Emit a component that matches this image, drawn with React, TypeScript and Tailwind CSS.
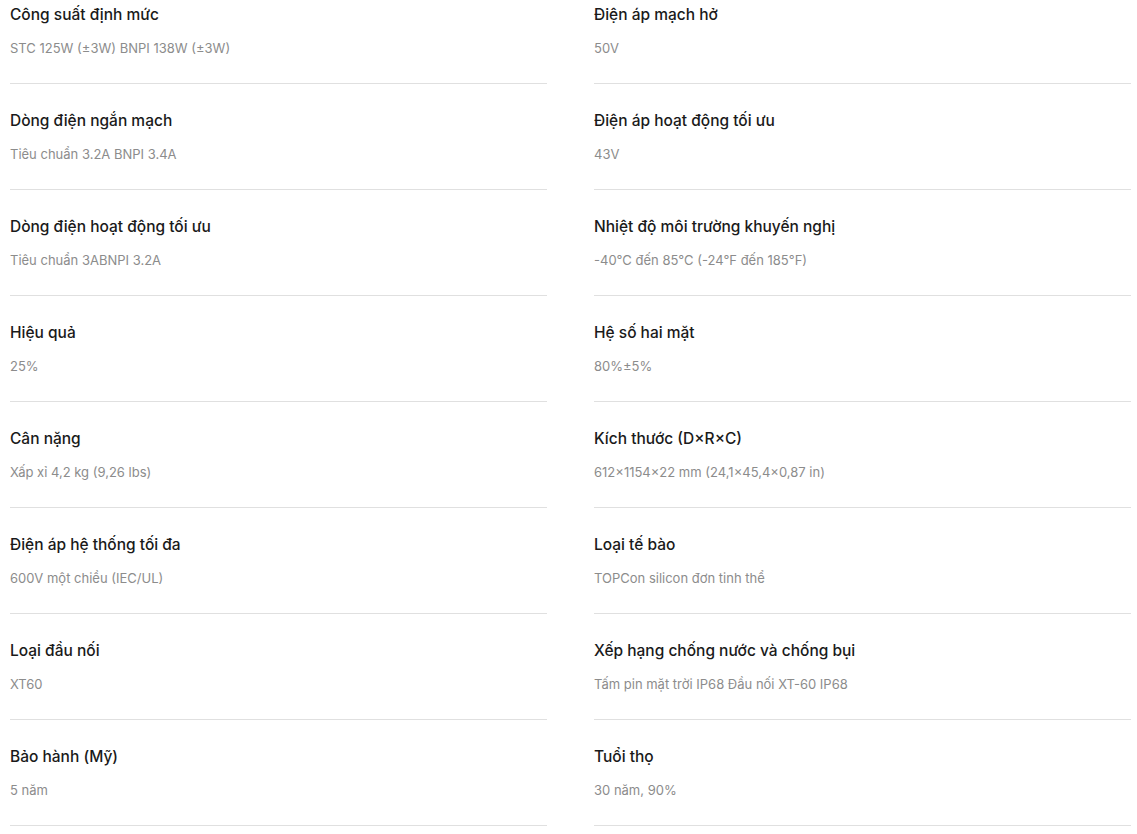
const specs: { label: string; value: string }[] = [
  { label: "Công suất định mức", value: "STC 125W (±3W) BNPI 138W (±3W)" },
  { label: "Điện áp mạch hở", value: "50V" },
  { label: "Dòng điện ngắn mạch", value: "Tiêu chuẩn 3.2A BNPI 3.4A" },
  { label: "Điện áp hoạt động tối ưu", value: "43V" },
  { label: "Dòng điện hoạt động tối ưu", value: "Tiêu chuẩn 3ABNPI 3.2A" },
  { label: "Nhiệt độ môi trường khuyến nghị", value: "-40°C đến 85°C (-24°F đến 185°F)" },
  { label: "Hiệu quả", value: "25%" },
  { label: "Hệ số hai mặt", value: "80%±5%" },
  { label: "Cân nặng", value: "Xấp xỉ 4,2 kg (9,26 lbs)" },
  { label: "Kích thước (D×R×C)", value: "612×1154×22 mm (24,1×45,4×0,87 in)" },
  { label: "Điện áp hệ thống tối đa", value: "600V một chiều (IEC/UL)" },
  { label: "Loại tế bào", value: "TOPCon silicon đơn tinh thể" },
  { label: "Loại đầu nối", value: "XT60" },
  { label: "Xếp hạng chống nước và chống bụi", value: "Tấm pin mặt trời IP68 Đầu nối XT-60 IP68" },
  { label: "Bảo hành (Mỹ)", value: "5 năm" },
  { label: "Tuổi thọ", value: "30 năm, 90%" },
];

export default function App() {
  return (
    <div className="min-h-screen bg-white font-['Inter',sans-serif]">
      <div className="grid grid-cols-2 gap-x-[47px] gap-y-[25px] pl-[10px] pr-[6px] pt-[3px]">
        {specs.map((s) => (
          <div key={s.label} className="border-b border-[#e0e0e0] pb-[25px]">
            <p className="text-[15.5px] leading-6 font-medium text-[#1a1a1a]">
              {s.label}
            </p>
            <p className="mt-[11px] text-[13px] leading-5 text-[#8c8c8c]">
              {s.value}
            </p>
          </div>
        ))}
      </div>
    </div>
  );
}
